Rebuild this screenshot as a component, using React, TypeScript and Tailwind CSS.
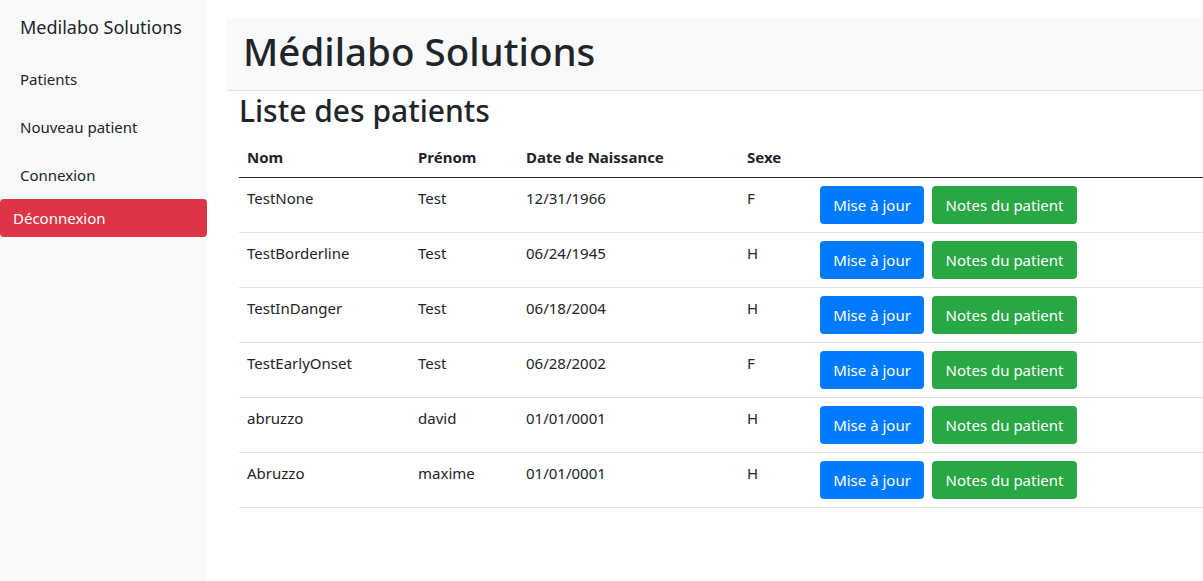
import React from "react";

interface Patient {
  nom: string;
  prenom: string;
  naissance: string;
  sexe: string;
}

const patients: Patient[] = [
  { nom: "TestNone", prenom: "Test", naissance: "12/31/1966", sexe: "F" },
  { nom: "TestBorderline", prenom: "Test", naissance: "06/24/1945", sexe: "H" },
  { nom: "TestInDanger", prenom: "Test", naissance: "06/18/2004", sexe: "H" },
  { nom: "TestEarlyOnset", prenom: "Test", naissance: "06/28/2002", sexe: "F" },
  { nom: "abruzzo", prenom: "david", naissance: "01/01/0001", sexe: "H" },
  { nom: "Abruzzo", prenom: "maxime", naissance: "01/01/0001", sexe: "H" },
];

const Sidebar = () => (
  <aside className="w-[207px] shrink-0 bg-[#f8f9fa] min-h-[581px]">
    <div className="pl-5 pt-3 text-[18px] leading-[30px]">Medilabo Solutions</div>
    <nav className="mt-[13px] flex flex-col">
      <a className="block px-5 py-3 text-[15px] leading-6">Patients</a>
      <a className="block px-5 py-3 text-[15px] leading-6">Nouveau patient</a>
      <a className="block px-5 py-3 text-[15px] leading-6 h-[48px]">Connexion</a>
      <button className="text-left px-[13px] py-[7px] bg-[#dc3545] text-white rounded text-[15px] leading-6">
        Déconnexion
      </button>
    </nav>
  </aside>
);

const App = () => {
  return (
    <div className="flex min-h-[581px] bg-white text-[#212529] font-['Noto_Sans',sans-serif]">
      <Sidebar />
      <main className="flex-1 pt-[18px] pl-5">
        <header className="bg-[#f8f9fa] border-b border-[#dee2e6] h-[73px] px-4 pb-[6px] flex items-center">
          <h1 className="text-[38.5px] leading-[48px] font-medium">Médilabo Solutions</h1>
        </header>
        <div className="pl-3">
          <h2 className="text-[30px] leading-[40px] font-medium mb-[6px]">Liste des patients</h2>
          <table className="w-full text-[15px] leading-6 border-collapse">
            <thead>
              <tr className="border-b border-[#212529] text-left">
                <th className="w-[171px] p-2 font-bold">Nom</th>
                <th className="w-[108px] p-2 font-bold">Prénom</th>
                <th className="w-[221px] p-2 font-bold">Date de Naissance</th>
                <th className="w-[73px] p-2 font-bold">Sexe</th>
                <th className="p-2"></th>
              </tr>
            </thead>
            <tbody>
              {patients.map((p, i) => (
                <tr key={i} className="border-b border-[#dee2e6] align-top">
                  <td className="p-2">{p.nom}</td>
                  <td className="p-2">{p.prenom}</td>
                  <td className="p-2">{p.naissance}</td>
                  <td className="p-2">{p.sexe}</td>
                  <td className="p-2">
                    <div className="flex gap-2">
                      <button className="h-[38px] w-[104px] bg-[#007bff] text-white rounded text-[15px]">Mise à jour</button>
                      <button className="h-[38px] w-[145px] bg-[#28a745] text-white rounded text-[15px]">Notes du patient</button>
                    </div>
                  </td>
                </tr>
              ))}
            </tbody>
          </table>
        </div>
      </main>
    </div>
  );
};

export default App;
